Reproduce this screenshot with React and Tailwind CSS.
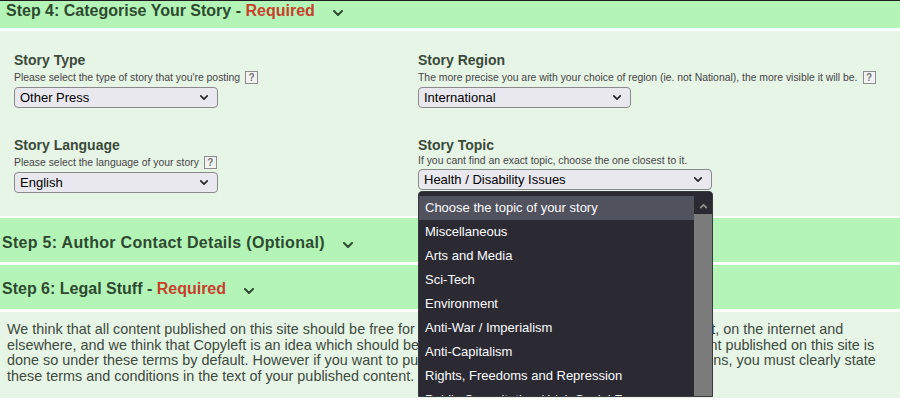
import React from "react";

const HelpIcon = () => (
  <span className="ml-[5px] inline-flex h-[13px] w-[13px] items-center justify-center border border-[#8c8c8c] bg-[#f3f3f3] text-[10px] font-bold leading-none text-[#777]">
    ?
  </span>
);

const Chevron = ({ className = "" }) => (
  <svg viewBox="0 0 10 6" className={className} fill="none">
    <polyline points="1,1 5,5 9,1" stroke="currentColor" strokeWidth="2" strokeLinecap="round" strokeLinejoin="round" />
  </svg>
);

function FakeSelect({ value, width }) {
  return (
    <div
      className={`flex h-[21px] items-center justify-between rounded-[4px] border border-[#8a8a8a] bg-[#e9e8ef] pl-[5px] pr-[9px] text-[13px] text-black ${width}`}
    >
      <span>{value}</span>
      <Chevron className="h-[5px] w-[8px] text-[#222]" />
    </div>
  );
}

function Field({ label, help, icon, children }) {
  return (
    <div className="flex flex-col">
      <div className="text-[14px] font-bold leading-[17px] text-[#3a4a3a]">{label}</div>
      <div className={`mt-[1px] flex items-center text-[10.4px] leading-[12px] text-[#444] ${icon ? "h-[15px]" : "h-[12px]"}`}>
        <span>{help}</span>
        {icon && <HelpIcon />}
      </div>
      <div className="mt-[2px]">{children}</div>
    </div>
  );
}

function StepHeader({ children, required, className = "", textClass = "" }) {
  return (
    <div className={`flex items-start bg-[#b4f5b7] text-[16px] font-bold leading-[20px] text-[#2d4a2f] ${className}`}>
      <span className={textClass}>
        {children}
        {required && <span className="text-[#c7402d]">Required</span>}
      </span>
      <Chevron className="ml-[18px] mt-[9px] h-[6px] w-[10px] text-[#2d4a2f]" />
    </div>
  );
}

const topics = [
  "Choose the topic of your story",
  "Miscellaneous",
  "Arts and Media",
  "Sci-Tech",
  "Environment",
  "Anti-War / Imperialism",
  "Anti-Capitalism",
  "Rights, Freedoms and Repression",
  "Public Consultation / Irish Social Forum",
];

export default function App() {
  return (
    <div className="relative h-[401px] w-[900px] overflow-hidden bg-white font-['Liberation_Sans',Arial,sans-serif]">
      {/* Step 4 */}
      <StepHeader required className="h-[31px] border-t border-b-[3px] border-t-[#1d1d1d] border-b-white pl-[6px]">
        Step 4: Categorise Your Story -{" "}
      </StepHeader>
      <div className="grid h-[185px] grid-cols-[404px_1fr] content-start gap-y-[29px] bg-[#e7f5e7] pl-[14px] pt-[21px]">
        <Field label="Story Type" help="Please select the type of story that you're posting" icon>
          <FakeSelect value="Other Press" width="w-[204px]" />
        </Field>
        <Field
          label="Story Region"
          help="The more precise you are with your choice of region (ie. not National), the more visible it will be."
          icon
        >
          <FakeSelect value="International" width="w-[213px]" />
        </Field>
        <Field label="Story Language" help="Please select the language of your story" icon>
          <FakeSelect value="English" width="w-[204px]" />
        </Field>
        <Field label="Story Topic" help="If you cant find an exact topic, choose the one closest to it.">
          <div className="relative">
            <FakeSelect value="Health / Disability Issues" width="w-[294px]" />
            <div className="absolute left-0 top-[22px] z-10 flex h-[206px] w-[295px] overflow-hidden rounded-t-[4px] border border-[#3a3942] bg-[#2b2a33]">
              <div className="flex-1 pt-[4px]">
                {topics.map((t, i) => (
                  <div
                    key={t}
                    className={`h-[24px] whitespace-nowrap pl-[6px] text-[13px] leading-[24px] text-[#fbfbfe] ${i === 0 ? "bg-[#52525e]" : ""}`}
                  >
                    {t}
                  </div>
                ))}
              </div>
              <div className="flex w-[18px] flex-col">
                <div className="flex h-[22px] items-end justify-center bg-[#2b2a33] pb-[5px]">
                  <svg viewBox="0 0 10 6" className="h-[5px] w-[9px]" fill="none">
                    <polyline points="1,5 5,1 9,5" stroke="#8f8f8f" strokeWidth="2" />
                  </svg>
                </div>
                <div className="flex-1 bg-[#7b7b7b]" />
              </div>
            </div>
          </div>
        </Field>
      </div>

      {/* Step 5 */}
      <StepHeader className="h-[46px] border-t-2 border-white pl-[2px] pt-[15px]" textClass="tracking-[0.3px]">
        Step 5: Author Contact Details (Optional)
      </StepHeader>

      {/* Step 6 */}
      <StepHeader required className="h-[47px] border-t-[3px] border-white pl-[2px] pt-[14px]">
        Step 6: Legal Stuff -{" "}
      </StepHeader>
      <div className="h-[89px] border-t-[3px] border-white bg-[#e7f5e7] px-[7px] pt-[10px] text-[14.4px] leading-[15.5px] text-[#3d4a3d]">
        We think that all content published on this site should be free for anyone to use, copy, redistribute and/or
        reprint, on the internet and
        <br />
        elsewhere, and we think that Copyleft is an idea which should be actively encouraged and supported. All
        content published on this site is
        <br />
        done so under these terms by default. However if you want to publish your work under other terms and
        conditions, you must clearly state
        <br />
        these terms and conditions in the text of your published content.
      </div>
      <div className="h-[3px] bg-white" />
    </div>
  );
}
